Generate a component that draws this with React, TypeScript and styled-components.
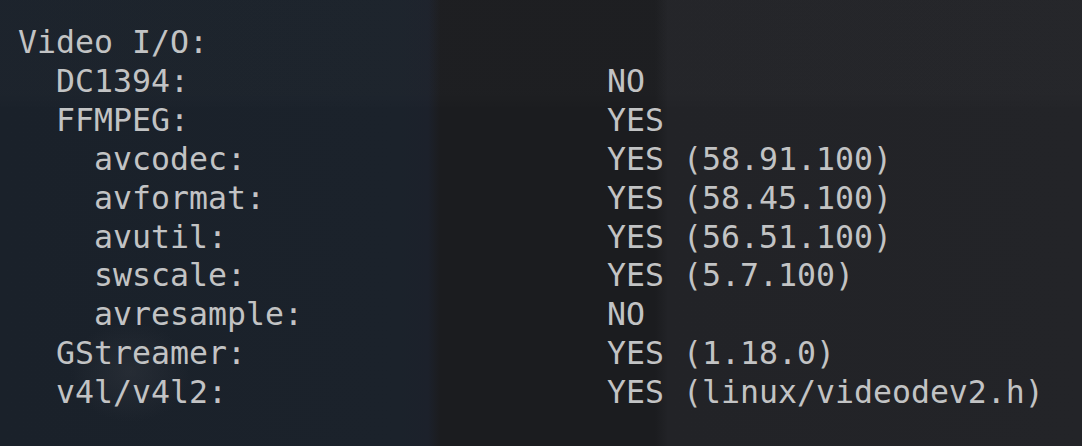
import React from "react";
import styled, { createGlobalStyle } from "styled-components";

const Global = createGlobalStyle`
  html, body {
    margin: 0;
    padding: 0;
    background: #232428;
  }
  #root {
    width: 1082px;
    height: 446px;
    overflow: hidden;
  }
`;

const Terminal = styled.div`
  width: 1082px;
  height: 446px;
  box-sizing: border-box;
  padding: 23px 0 0 18px;
  background:
    radial-gradient(ellipse 60px 50px at 130px 372px, rgba(60, 64, 72, 0.35), rgba(60, 64, 72, 0) 100%),
    linear-gradient(180deg, rgba(255, 255, 255, 0.012) 0px, rgba(255, 255, 255, 0.012) 95px, rgba(255, 255, 255, 0) 110px),
    linear-gradient(
      90deg,
      #1a212a 0px,
      #1b222b 400px,
      #1c212b 428px,
      #1b1c1f 440px,
      #1b1c1f 655px,
      #222327 668px,
      #232428 1082px
    );
  font-family: "DejaVu Sans Mono", "Liberation Mono", monospace;
  font-size: 31.56px;
  line-height: 38.9px;
  color: #c2c3c4;
`;

const Table = styled.div`
  display: grid;
  grid-template-columns: 589px 1fr;
  white-space: pre;
`;

const Label = styled.div<{ $level: number }>`
  padding-left: ${(p) => p.$level * 2}ch;
`;

const Value = styled.div``;

const Heading = styled.div`
  white-space: pre;
`;

type Row = { label: string; level: number; value: string };

const rows: Row[] = [
  { label: "DC1394:", level: 1, value: "NO" },
  { label: "FFMPEG:", level: 1, value: "YES" },
  { label: "avcodec:", level: 2, value: "YES (58.91.100)" },
  { label: "avformat:", level: 2, value: "YES (58.45.100)" },
  { label: "avutil:", level: 2, value: "YES (56.51.100)" },
  { label: "swscale:", level: 2, value: "YES (5.7.100)" },
  { label: "avresample:", level: 2, value: "NO" },
  { label: "GStreamer:", level: 1, value: "YES (1.18.0)" },
  { label: "v4l/v4l2:", level: 1, value: "YES (linux/videodev2.h)" },
];

export default function App() {
  return (
    <>
      <Global />
      <Terminal>
        <Heading>Video I/O:</Heading>
        <Table>
          {rows.map((r) => (
            <React.Fragment key={r.label}>
              <Label $level={r.level}>{r.label}</Label>
              <Value>{r.value}</Value>
            </React.Fragment>
          ))}
        </Table>
      </Terminal>
    </>
  );
}
